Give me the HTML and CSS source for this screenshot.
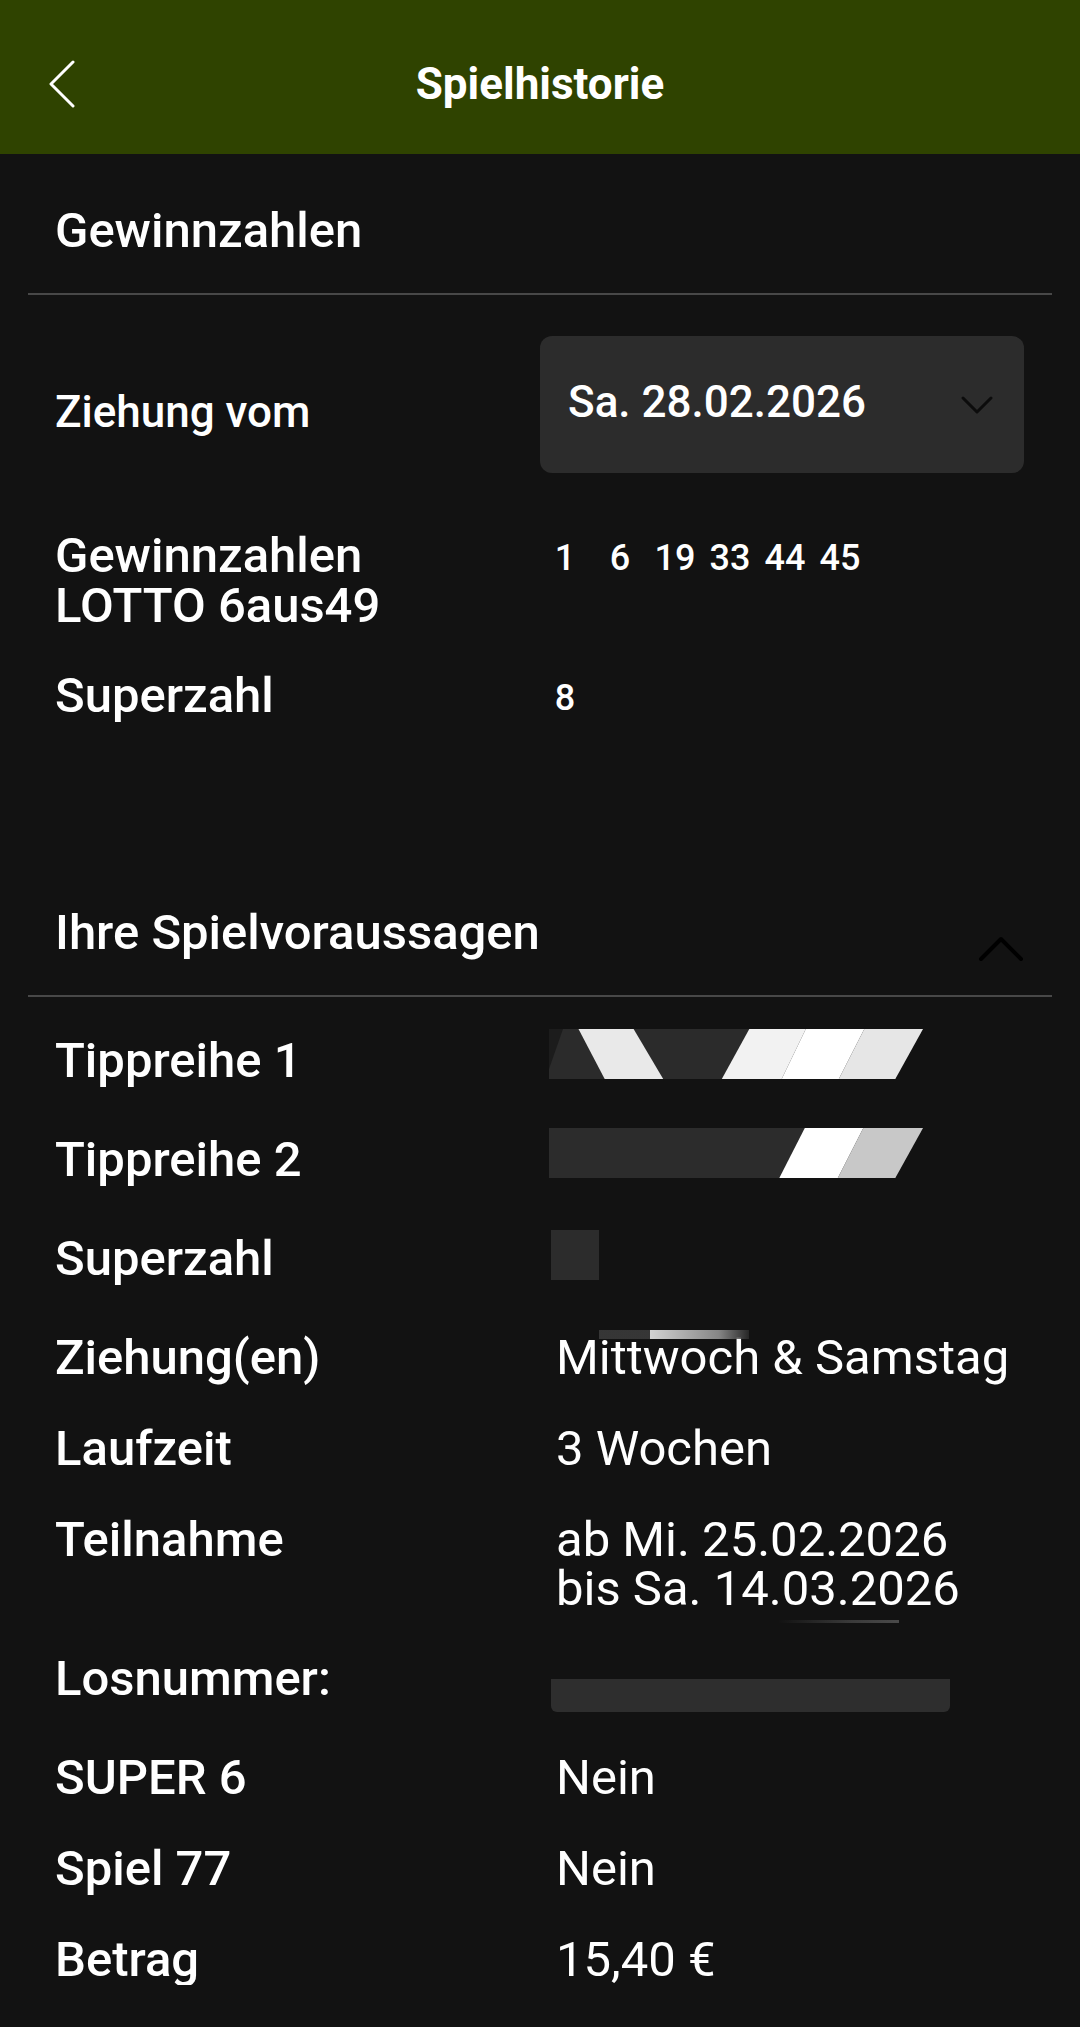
FILE: index.html
```html
<!DOCTYPE html>
<html lang="de">

<head>
  <meta charset="utf-8" />
  <title>Spielhistorie</title>
  <link rel="stylesheet" href="styles.css">
</head>

<body>
  <header class="topbar">
    <a class="back" href="#">
      <svg width="28" height="48" viewBox="0 0 28 48">
        <polyline points="25,2 3,24 25,46" fill="none" stroke="#fff" stroke-width="3" stroke-linecap="round" stroke-linejoin="round" />
      </svg>
    </a>
    <h1>Spielhistorie</h1>
    <span></span>
  </header>

  <section class="block">
    <div class="block-head">
      <h2>Gewinnzahlen</h2>
    </div>

    <div class="draw-row">
      <div class="label">Ziehung vom</div>
      <div class="select">
        <span class="select-text">Sa. 28.02.2026</span>
        <svg width="34" height="20" viewBox="0 0 34 20">
          <polyline points="3,3 17,17 31,3" fill="none" stroke="#0c0c0c" stroke-width="3" stroke-linecap="round" stroke-linejoin="round" />
        </svg>
      </div>
    </div>

    <div class="numbers-row">
      <div class="label">Gewinnzahlen<br>LOTTO 6aus49</div>
      <div class="balls">
        <span>1</span><span>6</span><span>19</span><span>33</span><span>44</span><span>45</span>
      </div>
    </div>

    <div class="numbers-row super">
      <div class="label">Superzahl</div>
      <div class="balls"><span>8</span></div>
    </div>
  </section>

  <section class="block second">
    <div class="block-head">
      <h2>Ihre Spielvoraussagen</h2>
      <svg class="toggle" width="48" height="28" viewBox="0 0 48 28">
        <polyline points="4,24 24,4 44,24" fill="none" stroke="#000" stroke-width="4" stroke-linecap="round" stroke-linejoin="round" />
      </svg>
    </div>

    <div class="details">
      <div class="label">Tippreihe 1</div>
      <div class="value tall">
        <svg class="masked" width="374" height="50" viewBox="0 0 374 50">
          <polygon points="0,0 374,0 346,50 0,50" fill="#2b2b2b" />
          <polygon points="0,0 14,0 0,40" fill="#1c1c1c" />
          <polygon points="29.5,0 84.6,0 114.2,50 55.7,50" fill="#e9e9e9" />
          <polygon points="200.3,0 256.8,0 232.7,50 172.8,50" fill="#f2f2f2" />
          <polygon points="256.8,0 315.3,0 289.8,50 232.7,50" fill="#ffffff" />
          <polygon points="315.3,0 374,0 346.3,50 289.8,50" fill="#e6e6e6" />
        </svg>
      </div>

      <div class="label">Tippreihe 2</div>
      <div class="value tall">
        <svg class="masked" width="374" height="50" viewBox="0 0 374 50">
          <polygon points="0,0 374,0 346,50 0,50" fill="#2c2c2c" />
          <polygon points="255.8,0 314.3,0 288.8,50 230.3,50" fill="#ffffff" />
          <polygon points="314.3,0 374,0 346.3,50 288.8,50" fill="#c8c8c8" />
        </svg>
      </div>

      <div class="label">Superzahl</div>
      <div class="value tall">
        <div class="masked-box"></div>
      </div>

      <div class="label">Ziehung(en)</div>
      <div class="value smeared">Mittwoch &amp; Samstag</div>

      <div class="label">Laufzeit</div>
      <div class="value">3 Wochen</div>

      <div class="label">Teilnahme</div>
      <div class="value period">ab Mi. 25.02.2026<br>bis Sa. 14.03.2026</div>

      <div class="label">Losnummer:</div>
      <div class="value lot">
        <div class="masked-lot"></div>
      </div>

      <div class="label">SUPER 6</div>
      <div class="value">Nein</div>

      <div class="label">Spiel 77</div>
      <div class="value">Nein</div>

      <div class="label">Betrag</div>
      <div class="value">15,40 €</div>
    </div>
  </section>
</body>

</html>
```

FILE: styles.css
```css
* {
  box-sizing: border-box;
}

body {
  margin: 0;
  background: #121212;
  color: #fff;
  font-family: Roboto, "Liberation Sans", Arial, sans-serif;
}

.topbar {
  display: grid;
  grid-template-columns: 1fr auto 1fr;
  align-items: center;
  height: 154px;
  padding-top: 14px;
  background: #2f4300;
}

.back {
  display: flex;
  padding-left: 48px;
}

.topbar h1 {
  margin: 0;
  font-size: 44px;
  line-height: 50px;
  font-weight: 700;
}

.block {
  margin: 0 28px;
}

.block.second {
  margin-top: 185px;
}

.block-head {
  display: flex;
  justify-content: space-between;
  padding: 52px 27px 37px;
  border-bottom: 2px solid #484848;
}

.second .block-head {
  padding-top: 0;
}

.block-head h2 {
  margin: 0;
  font-size: 49px;
  line-height: 50px;
  font-weight: 500;
}

.toggle {
  align-self: flex-end;
  margin-bottom: -5px;
}

.label {
  font-size: 49px;
  line-height: 50px;
  font-weight: 500;
}

.draw-row,
.numbers-row {
  display: grid;
  grid-template-columns: 485px 1fr;
  align-items: start;
  padding: 0 28px 0 27px;
}

.draw-row {
  margin-top: 41px;
}

.draw-row .label {
  margin-top: 51px;
  font-size: 44px;
}

.select {
  display: flex;
  align-items: center;
  justify-content: space-between;
  height: 137px;
  padding: 0 30px 0 28px;
  background: #2c2c2c;
  border-radius: 12px;
}

.select-text {
  margin-bottom: 6px;
  font-size: 44px;
  line-height: 50px;
  font-weight: 500;
}

.numbers-row {
  margin-top: 58px;
}

.numbers-row.super {
  margin-top: 40px;
}

.balls {
  display: flex;
  gap: 33px;
  padding: 2px 0 0 14px;
  font-size: 36px;
  line-height: 50px;
  font-weight: 500;
}

.balls span {
  display: flex;
  justify-content: center;
  width: 22px;
}

.details {
  display: grid;
  grid-template-columns: 485px 1fr;
  row-gap: 41px;
  padding: 39px 28px 0 27px;
}

.value {
  position: relative;
  padding-left: 16px;
  font-size: 49px;
  line-height: 50px;
}

.value.tall {
  min-height: 58px;
  padding-left: 9px;
}

.masked {
  display: block;
  margin-top: -7px;
}

.masked-box {
  width: 48px;
  height: 50px;
  margin: -4px 0 0 2px;
  background: #2c2c2c;
}

.smeared::before {
  content: "";
  position: absolute;
  top: -3px;
  left: 59px;
  width: 150px;
  height: 9px;
  background: linear-gradient(to right, #3c3c3c 0 34%, #f4f4f4 34%, #9a9a9a 80%, #2a2a2a 100%);
  opacity: 0.85;
}

.value.period {
  line-height: 49px;
}

.period::after {
  content: "";
  position: absolute;
  bottom: -10px;
  left: 238px;
  width: 121px;
  height: 3px;
  background: linear-gradient(to right, #121212, #3a3a3a 60%, #4a4a4a);
}

.value.lot {
  min-height: 58px;
  padding-left: 11px;
}

.masked-lot {
  width: 399px;
  height: 33px;
  margin-top: 25px;
  background: #2e2e2e;
  border-radius: 0 0 6px 6px;
}
```
